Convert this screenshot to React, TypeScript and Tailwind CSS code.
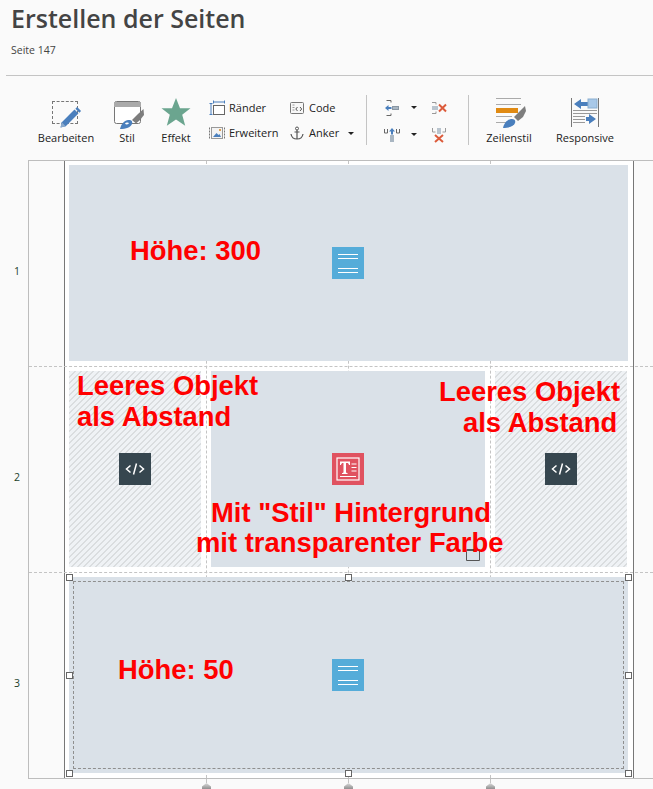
const uiFont = { fontFamily: '"Open Sans", "Noto Sans", sans-serif' };

function Pencil() {
  return (
    <svg width="28" height="28" viewBox="0 0 32 32" className="absolute left-[11px] top-[5px]">
      <path d="M4 28l1.500-6L20 7.500l4.500 4.500L10 26.500z" fill="#4a7fbd" />
      <path d="M21 6.500l2-2 4.500 4.500-2 2z" fill="#4a7fbd" />
      <path d="M4 28l1.500-6 4.500 4.500z" fill="#8aa9cc" />
    </svg>
  );
}

function EditIcon() {
  return (
    <div className="relative w-[40px] h-[32px]">
      <div className="absolute left-[6px] top-[3px] w-[26px] h-[23px] border border-dashed border-[#777]" />
      <Pencil />
    </div>
  );
}

function StyleIcon() {
  return (
    <svg width="30" height="30" viewBox="0 0 30 30" className="ml-[4px]">
      <path d="M.5 3.500a2 2 0 012-2h22a2 2 0 012 2v18a2 2 0 01-2 2h-22a2 2 0 01-2-2z" fill="#fff" stroke="#777" />
      <path d="M0 2h27v5H0z" fill="#aaa" />
      <path d="M18 20l6-6 5.500-5 .5 6-4 5-4 3.500z" fill="#7d7d7d" />
      <path d="M6 29c1-4 3-8 8-9 3-.500 5 1 4 4-1 3-6 5-12 5z" fill="#4a7fbd" />
      <path d="M11 23.500c1-1 3-1.500 4-.5-.5 1.500-3 2-4 .5z" fill="#fff" />
    </svg>
  );
}

function StarIcon() {
  return (
    <svg width="30" height="30" viewBox="0 0 30 30" className="mb-[3px]">
      <path d="M15 1l4 10.300h10.500l-8.300 6.400 3 11-9.200-6.300-9.200 6.300 3-11L.5 11.300H11z" fill="#6ba58f" />
    </svg>
  );
}

function MarginIcon() {
  return (
    <svg width="16" height="16" viewBox="0 0 16 16">
      <path d="M.5 3.500h3M2 3.500v11M.5 14.500h3M4.500 .5v3M15.500 .5v3M4.500 2h11" fill="none" stroke="#4a7fbd" />
      <rect x="4.500" y="5.500" width="11" height="9" fill="#fff" stroke="#666" />
    </svg>
  );
}

function ExpandIcon() {
  return (
    <svg width="16" height="16" viewBox="0 0 16 16">
      <path d="M.5 2.500v11M15.500 2.500v11" stroke="#777" strokeDasharray="2 1" />
      <rect x="2.500" y="2.500" width="11" height="11" fill="#f3f3f3" stroke="#999" />
      <path d="M4 12l3.500-4 2 2 1-1 1.500 3z" fill="#4a7fbd" />
      <rect x="10" y="4" width="2" height="2" fill="#e0a050" />
    </svg>
  );
}

function CodeIcon() {
  return (
    <svg width="14" height="14" viewBox="0 0 14 14">
      <rect x=".5" y="1.500" width="13" height="11" rx="1" fill="#f7f7f7" stroke="#777" />
      <path d="M2.500 4h2M2.500 6.500h2M2.500 9h2" stroke="#999" />
      <path d="M7.500 6L5.800 8l1.700 2M10 6l1.700 2-1.700 2" fill="none" stroke="#555" />
    </svg>
  );
}

function AnchorIcon() {
  return (
    <svg width="14" height="14" viewBox="0 0 14 14">
      <circle cx="7" cy="2.500" r="1.500" fill="none" stroke="#555" />
      <path d="M7 4v9M4.500 6h5M1 8c.5 3 3 5 6 5s5.500-2 6-5" fill="none" stroke="#555" strokeWidth="1.200" />
    </svg>
  );
}

function Caret() {
  return <div className="w-0 h-0 border-x-[3px] border-x-transparent border-t-[3px] border-t-[#222]" />;
}

function InsertLeftIcon() {
  return (
    <svg width="16" height="16" viewBox="0 0 16 16">
      <path d="M2.500 .5H7v2M2.500 15.500H7v-2" fill="none" stroke="#666" />
      <path d="M1 8l3.500-3v2h3v2h-3v2z" fill="#4a7fbd" />
      <rect x="8.500" y="6.500" width="6" height="3" fill="#a9b6c2" stroke="#8896a3" />
    </svg>
  );
}

function DeleteLeftIcon() {
  return (
    <svg width="15" height="14" viewBox="0 0 15 14">
      <path d="M0 1.500h4v2M0 12.500h4v-2" fill="none" stroke="#999" />
      <rect x="0" y="5" width="6" height="4" fill="#b9c4ce" />
      <path d="M7 3.500l7 7M14 3.500l-7 7" stroke="#dc5b3b" strokeWidth="2" />
    </svg>
  );
}

function InsertTopIcon() {
  return (
    <svg width="16" height="14" viewBox="0 0 16 14">
      <path d="M.5 1v4h3V1M12.500 1v4h3V1" fill="none" stroke="#666" />
      <path d="M8 0l3 3.500H9v3H7v-3H5z" fill="#4a7fbd" />
      <rect x="6" y="7" width="4" height="7" fill="#a9b6c2" />
    </svg>
  );
}

function DeleteTopIcon() {
  return (
    <svg width="14" height="16" viewBox="0 0 14 16">
      <path d="M.5 1v4h3M13.500 1v4h-3" fill="none" stroke="#999" />
      <rect x="5" y="1" width="4" height="6" fill="#b9c4ce" />
      <path d="M3 8l8 7M11 8l-8 7" stroke="#dc5b3b" strokeWidth="2" />
    </svg>
  );
}

function RowStyleIcon() {
  return (
    <svg width="30" height="30" viewBox="0 0 30 30" className="ml-[4px] mb-[2px]">
      <path d="M0 .500h25M0 6.500h25M0 24.500h10M0 18.500h16" stroke="#aaa" />
      <rect x="0" y="10" width="22" height="5" fill="#e08a12" />
      <path d="M18 19l6-6 5-5 1 5-3 6-5 4z" fill="#7d7d7d" />
      <path d="M7 30c1-4 3-8 8-9 3-.500 5 1 4 4-1 3-6 5-12 5z" fill="#4a7fbd" />
    </svg>
  );
}

function ResponsiveIcon() {
  return (
    <svg width="28" height="29" viewBox="0 0 28 29" className="mb-[3px]">
      <path d="M.5 0v29M27.500 0v29" stroke="#777" />
      <path d="M3 6l7-5v3h8v4h-8v3z" fill="#4a7fbd" />
      <rect x="17" y="1" width="9" height="9" fill="#a8c8e8" stroke="#8aaed0" />
      <path d="M2 12.500h24M2 15.500h24" stroke="#999" />
      <path d="M2 18.500h12M2 21.500h12M2 24.500h12" stroke="#999" />
      <path d="M25 21l-7-5v3h-3v4h3v3z" fill="#4a7fbd" />
    </svg>
  );
}

function BigTool({ label, width, className, children }: { label: string; width: string; className: string; children: React.ReactNode }) {
  return (
    <div className={`flex flex-col items-center ${width} ${className}`}>
      <div className="h-[34px] flex items-end justify-center">{children}</div>
      <span className="text-[11px] leading-[16px] text-[#222] whitespace-nowrap">{label}</span>
    </div>
  );
}

function SmallTool({ label, icon, width }: { label: string; icon: React.ReactNode; width: string }) {
  return (
    <div className={`flex items-center gap-[4px] h-[16px] ${width}`}>
      <div className="w-[16px] flex justify-center">{icon}</div>
      <span className="text-[11px] leading-[16px] text-[#222] whitespace-nowrap">{label}</span>
    </div>
  );
}

function Separator({ className }: { className: string }) {
  return <div className={`w-px h-[50px] bg-[#c4c4c4] ${className}`} />;
}

function Tile({ color, children }: { color: string; children: React.ReactNode }) {
  return <div className={`w-[32px] h-[32px] flex items-center justify-center ${color}`}>{children}</div>;
}

function TextBlockTile() {
  return (
    <Tile color="bg-[#55acd9]">
      <svg width="20" height="20" viewBox="0 0 20 20">
        <path d="M0 1.500h20M0 5.500h20M0 15.500h20M0 19.500h20" stroke="#fff" />
      </svg>
    </Tile>
  );
}

function CodeTile() {
  return (
    <Tile color="bg-[#36464f]">
      <svg width="20" height="14" viewBox="0 0 20 14">
        <path d="M5.500 3.500L1.500 7l4 3.500M14.500 3.500l4 3.500-4 3.500M11.500 1.500l-3 11" fill="none" stroke="#fff" strokeWidth="1.500" />
      </svg>
    </Tile>
  );
}

function TextTile() {
  return (
    <Tile color="bg-[#e05260]">
      <svg width="24" height="24" viewBox="0 0 24 24">
        <rect x="1" y="1" width="22" height="22" fill="none" stroke="#fff" strokeWidth="1.200" />
        <path d="M4 4.500h10v3.500h-1c-.3-1.500-1-2-2-2h-1v9c0 .8.500 1 1.500 1v1h-5.500v-1c1 0 1.500-.2 1.500-1V6H7c-1 0-1.700.500-2 2H4z" fill="#fff" />
        <path d="M15.500 7h5M15.500 10.500h5M15.500 14h5M4 19.500h16" stroke="#fff" />
      </svg>
    </Tile>
  );
}

function Handle({ className }: { className: string }) {
  return <div className={`absolute w-[7px] h-[7px] bg-white border border-[#666] ${className}`} />;
}

function GridRow({ children }: { children: React.ReactNode }) {
  return (
    <div className="flex h-[206px] border-b border-dashed border-[#c4c4c4]">
      <div className="w-[36px] shrink-0" />
      <div className="relative w-[568px] shrink-0 pl-[4px] pt-[4px] flex gap-[10px] h-[205px]">{children}</div>
    </div>
  );
}

function Note({ className, children }: { className: string; children: React.ReactNode }) {
  return (
    <div className={`absolute text-[27.400px] leading-[31px] font-bold text-[#ff0000] whitespace-nowrap font-['Liberation_Sans',Arial,sans-serif] ${className}`}>
      {children}
    </div>
  );
}

function ColumnMark({ className }: { className: string }) {
  return (
    <div className={`absolute top-[779px] w-[9px] ${className}`}>
      <div className="ml-[4px] h-[4px] border-l border-dashed border-[#c4c4c4]" />
      <div className="h-[6px] bg-gradient-to-b from-[#dcdcdc] to-[#909090] [clip-path:polygon(50%_0,100%_60%,100%_100%,0_100%,0_60%)]" />
    </div>
  );
}

const hatched = 'bg-[linear-gradient(135deg,#dadddf_0,#dadddf_15%,#eff2f5_15%,#eff2f5_50%,#dadddf_50%,#dadddf_65%,#eff2f5_65%,#eff2f5_100%)] bg-size-[6px_6px]';

export default function App() {
  return (
    <div className="relative w-[653px] h-[789px] overflow-hidden bg-[#fafafa]" style={uiFont}>
      {/* header */}
      <div className="ml-[6px] h-[76px] border-b border-[#c4c4c4] pl-[5px]">
        <h1 className="pt-[1px] text-[25px] leading-[34px] font-semibold text-[#444]">Erstellen der Seiten</h1>
        <p className="mt-[7px] text-[10.500px] leading-[16px] text-[#444]">Seite 147</p>
      </div>

      {/* toolbar */}
      <div className="h-[84px] pl-[38px] pt-[20px] flex items-start">
        <BigTool label="Bearbeiten" width="w-[56px]" className=""><EditIcon /></BigTool>
        <BigTool label="Stil" width="w-[40px]" className="ml-[13px]"><StyleIcon /></BigTool>
        <BigTool label="Effekt" width="w-[40px]" className="ml-[9px]"><StarIcon /></BigTool>

        <div className="ml-[13px] pt-[4px] flex flex-col gap-[9px] w-[80px]">
          <SmallTool label="Ränder" icon={<MarginIcon />} width="" />
          <SmallTool label="Erweitern" icon={<ExpandIcon />} width="" />
        </div>
        <div className="pt-[4px] flex flex-col gap-[9px] w-[77px]">
          <SmallTool label="Code" icon={<CodeIcon />} width="" />
          <div className="flex items-center">
            <SmallTool label="Anker" icon={<AnchorIcon />} width="w-[59px]" />
            <Caret />
          </div>
        </div>

        <Separator className="-mt-[1px]" />

        <div className="ml-[17px] pt-[3px] flex flex-col gap-[10px] w-[33px]">
          <div className="flex items-center justify-between h-[17px]">
            <InsertLeftIcon />
            <Caret />
          </div>
          <div className="flex items-center justify-between h-[17px]">
            <InsertTopIcon />
            <Caret />
          </div>
        </div>
        <div className="ml-[15px] pt-[3px] flex flex-col gap-[10px] w-[16px]">
          <div className="h-[17px] flex items-center"><DeleteLeftIcon /></div>
          <div className="h-[17px] flex items-center"><DeleteTopIcon /></div>
        </div>

        <Separator className="ml-[20px] -mt-[1px]" />

        <BigTool label="Zeilenstil" width="w-[54px]" className="ml-[13px]"><RowStyleIcon /></BigTool>
        <BigTool label="Responsive" width="w-[62px]" className="ml-[18px]"><ResponsiveIcon /></BigTool>
      </div>

      {/* grid */}
      <div className="flex">
        <div className="w-[28px] shrink-0 pt-[1px] text-[10.500px] text-[#1c3f2a]">
          <div className="h-[206px] flex items-center justify-center pl-[6px] pt-[16px]">1</div>
          <div className="h-[206px] flex items-center justify-center pl-[6px] pt-[16px]">2</div>
          <div className="h-[206px] flex items-center justify-center pl-[6px] pt-[16px]">3</div>
        </div>
        <div className="relative flex-1 h-[619px] border border-r-0 border-[#bdbdbd]">
          <div className="absolute left-[35px] top-0 bottom-0 w-[570px] bg-white border-x border-[#777]">
            <div className="absolute left-[141px] top-0 bottom-0 border-l border-dashed border-[#c4c4c4]" />
            <div className="absolute left-[283px] top-0 bottom-0 border-l border-dashed border-[#c4c4c4]" />
            <div className="absolute left-[425px] top-0 bottom-0 border-l border-dashed border-[#c4c4c4]" />
          </div>
          <div className="relative">
            <GridRow>
              <div className="w-[559px] h-[196px] bg-[#dae1e8] flex items-center justify-center pr-[1px]">
                <TextBlockTile />
              </div>
            </GridRow>
            <GridRow>
              <div className={`w-[132px] h-[196px] flex items-center justify-center ${hatched}`}>
                <CodeTile />
              </div>
              <div className="relative w-[274px] h-[196px] bg-[#dae1e8] flex items-center justify-center">
                <TextTile />
                <div className="absolute left-[255px] top-[178px] w-[14px] h-[12px] rounded-[1px] border border-[#555] border-t-2" />
              </div>
              <div className={`w-[132px] h-[196px] flex items-center justify-center ${hatched}`}>
                <CodeTile />
              </div>
            </GridRow>
            <div className="flex h-[205px]">
              <div className="w-[36px] shrink-0" />
              <div className="relative pl-[4px] pt-[4px]">
                <div className="relative w-[559px] h-[196px] bg-[#dae1e8] p-[4px]">
                  <div className="w-full h-full border border-dashed border-[#8f8f8f] flex items-center justify-center pr-[1px]">
                    <TextBlockTile />
                  </div>
                  <Handle className="left-[-3px] top-[-3px]" />
                  <Handle className="left-[276px] top-[-3px]" />
                  <Handle className="left-[556px] top-[-3px]" />
                  <Handle className="left-[-3px] top-[95px]" />
                  <Handle className="left-[556px] top-[95px]" />
                  <Handle className="left-[-3px] top-[193px]" />
                  <Handle className="left-[276px] top-[193px]" />
                  <Handle className="left-[556px] top-[193px]" />
                </div>
              </div>
            </div>
          </div>
        </div>
      </div>

      {/* column handles under the grid */}
      <ColumnMark className="left-[202px]" />
      <ColumnMark className="left-[344px]" />
      <ColumnMark className="left-[486px]" />

      {/* red annotations */}
      <Note className="left-[130px] top-[235px]">Höhe: 300</Note>
      <Note className="left-[77px] top-[370px]">Leeres Objekt<br />als Abstand</Note>
      <Note className="left-[439px] top-[376px]">Leeres Objekt</Note>
      <Note className="left-[463px] top-[407px]">als Abstand</Note>
      <Note className="left-[211px] top-[497px]">Mit "Stil" Hintergrund</Note>
      <Note className="left-[196px] top-[527px]">mit transparenter Farbe</Note>
      <Note className="left-[118px] top-[654px]">Höhe: 50</Note>
    </div>
  );
}
